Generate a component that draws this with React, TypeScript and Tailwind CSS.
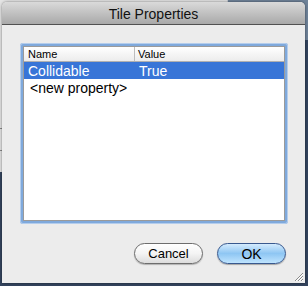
import React from 'react';

const font = { fontFamily: '"Liberation Sans", Arial, sans-serif' };

export default function App() {
  return (
    <div className="relative w-[308px] h-[286px] overflow-hidden bg-[#34445e]" style={font}>
      {/* desktop behind the dialog */}
      <div className="absolute left-0 top-0 w-[227px] h-[172px] bg-[#e4e4e4]">
        <div className="absolute left-0 top-[128px] w-[4px] h-px bg-[#8a8a8a]" />
        <div className="absolute left-0 top-[150px] w-[4px] h-px bg-[#8a8a8a]" />
      </div>
      <div className="absolute left-[227px] top-0 w-[81px] h-[40px] bg-[#6f8399] border-l border-[#c8ccd2]" />

      {/* dialog window */}
      <div className="absolute left-[2px] top-[2px] w-[303px] h-[281px] flex flex-col rounded-t-[5px] overflow-hidden bg-[#ececec] shadow-[0_0_3px_rgba(0,0,0,0.5)]">
        <div className="h-[23px] shrink-0 flex items-center justify-center pt-px bg-gradient-to-b from-[#dadada] to-[#a9a9a9] border-b border-[#515151]">
          <span className="text-[14px] text-[#111] leading-none">Tile Properties</span>
        </div>

        <div className="flex-1 flex flex-col px-[18px] pt-[18px]">
          {/* table with focus ring */}
          <div className="h-[181px] w-[268px] rounded-[3px] p-[3px] bg-[#7fa9dc] shadow-[inset_0_0_0_1px_#b4cdec]">
            <div className="h-full bg-white border border-[#9a9a9a] flex flex-col">
              <div className="h-[15px] flex text-[11px] text-black leading-none bg-gradient-to-b from-white to-[#ececec] border-b border-[#b0b0b0]">
                <div className="w-[111px] pl-[4px] flex items-center border-r border-[#bdbdbd]">Name</div>
                <div className="flex-1 pl-[3px] flex items-center">Value</div>
              </div>
              <div className="h-[17px] flex items-center pt-px bg-[#3875d7] text-white text-[14px] leading-none">
                <div className="w-[111px] pl-[4px]">Collidable</div>
                <div className="flex-1 pl-[4px]">True</div>
              </div>
              <div className="h-[17px] flex items-center pt-px text-black text-[14px] leading-none pl-[6px]">
                &lt;new property&gt;
              </div>
            </div>
          </div>

          {/* buttons */}
          <div className="flex justify-end gap-[14px] mt-[19px] pr-px">
            <button className="w-[69px] h-[21px] rounded-full border border-[#6d6d6d] bg-gradient-to-b from-white via-[#f4f4f4] to-[#dcdcdc] text-[13px] text-black leading-none shadow-[0_1px_1px_rgba(0,0,0,0.25)]">
              Cancel
            </button>
            <button className="w-[69px] h-[21px] rounded-full border border-[#39598f] bg-gradient-to-b from-[#d4ebfd] via-[#8ec6f3] to-[#bfe4fe] text-[14px] text-black leading-none shadow-[0_1px_1px_rgba(0,0,0,0.3)]">
              OK
            </button>
          </div>
        </div>

        {/* resize grip */}
        <svg className="absolute right-[1px] bottom-[1px]" width="11" height="11" viewBox="0 0 11 11">
          <path d="M10 2 L2 10 M10 5 L5 10 M10 8 L8 10" stroke="#8a8a8a" strokeWidth="1" />
          <path d="M10 3 L3 10 M10 6 L6 10 M10 9 L9 10" stroke="#ffffff" strokeWidth="1" />
        </svg>
      </div>
    </div>
  );
}
